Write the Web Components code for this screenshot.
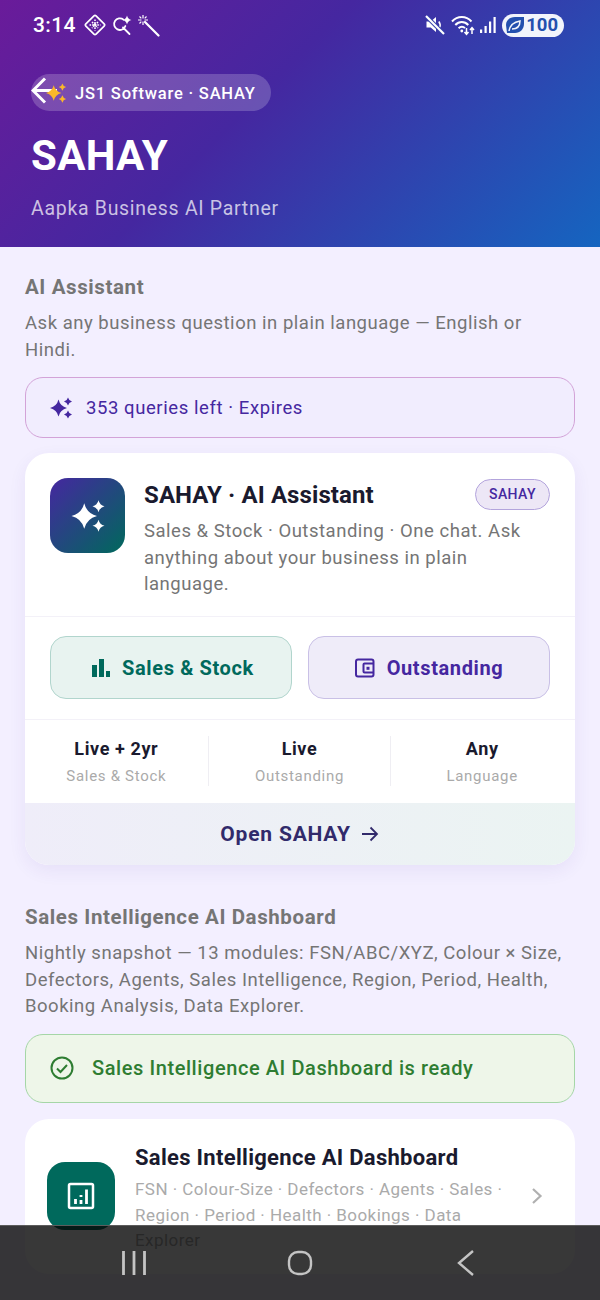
<!DOCTYPE html>
<html>
<head>
<meta charset="utf-8">
<title>SAHAY</title>
<style>
  html, body { margin: 0; padding: 0; }
  body {
    width: 600px;
    height: 1300px;
    overflow: hidden;
    position: relative;
    background: #f3efff;
    font-family: Roboto, "Liberation Sans", sans-serif;
  }
  main { display: block; padding: 27px 25px 0; }
  .gap-s { display: block; height: 15px; }
  .gap-m { display: block; height: 16px; }
  .gap-l { display: block; height: 39px; }
</style>
</head>
<body>

<app-header></app-header>

<main>
  <section-intro heading="AI Assistant">Ask any business question in plain language — English or Hindi.</section-intro>
  <query-chip>353 queries left · Expires</query-chip>
  <span class="gap-s"></span>
  <sahay-card></sahay-card>
  <span class="gap-l"></span>
  <section-intro heading="Sales Intelligence AI Dashboard">Nightly snapshot — 13 modules: FSN/ABC/XYZ, Colour × Size, Defectors, Agents, Sales Intelligence, Region, Period, Health, Booking Analysis, Data Explorer.</section-intro>
  <ready-banner>Sales Intelligence AI Dashboard is ready</ready-banner>
  <span class="gap-m"></span>
  <dash-card></dash-card>
</main>

<nav-bar></nav-bar>

<script>
(function () {

  // concave four point star, used by every sparkle icon
  function star(cx, cy, r) {
    const k = r * 0.2;
    return `M${cx} ${cy - r}Q${cx + k} ${cy - k} ${cx + r} ${cy}Q${cx + k} ${cy + k} ${cx} ${cy + r}Q${cx - k} ${cy + k} ${cx - r} ${cy}Q${cx - k} ${cy - k} ${cx} ${cy - r}Z`;
  }

  const SPARKLES = star(9.5, 12, 8.5) + star(19, 5.5, 4) + star(19, 18.5, 4);

  class Base extends HTMLElement {
    constructor() {
      super();
      this._shadowRoot = this.attachShadow({ mode: "open" });
    }
    connectedCallback() {
      this.render();
    }
  }

  // ===== STATUS BAR + HEADER =====
  class AppHeader extends Base {
    render() {
      this._shadowRoot.innerHTML = `
        <style>
          :host {
            display: block;
            height: 247px;
            box-sizing: border-box;
            background: linear-gradient(135deg, #6a1b9a 0%, #4527a0 42%, #1565c0 100%);
            color: #fff;
          }
          .status {
            display: flex;
            align-items: center;
            height: 50px;
            padding: 0 36px 0 33px;
          }
          .time { font-size: 21px; font-weight: 500; letter-spacing: .4px; margin-right: 8px; }
          .status svg { display: block; flex: none; }
          .spacer { flex: 1; }
          .batt {
            display: flex;
            align-items: center;
            gap: 1px;
            height: 23px;
            padding: 0 6px 0 3px;
            border-radius: 12px;
            background: #f2f4fb;
            color: #2450ae;
            font-size: 18.5px;
            font-weight: 700;
            margin-left: 6px;
          }
          .body { padding: 24px 31px 0; }
          .pill {
            position: relative;
            display: inline-flex;
            align-items: center;
            height: 37px;
            width: 240px;
            box-sizing: border-box;
            padding: 2px 0 0 44px;
            border-radius: 19px;
            background: rgba(255,255,255,.2);
            font-size: 16.5px;
            font-weight: 500;
            letter-spacing: .8px;
            white-space: nowrap;
          }
          .pill .spark { position: absolute; left: 14px; top: 8px; }
          .pill .back { position: absolute; left: 0; top: 0; }
          h1 { margin: 17px 0 0; font-size: 42px; line-height: 56px; font-weight: 700; letter-spacing: .3px; }
          p { margin: 12px 0 0; font-size: 19.5px; line-height: 26px; letter-spacing: .7px; color: rgba(255,255,255,.72); }
        </style>
        <div class="status">
          <span class="time">3:14</span>
          <svg width="22" height="22" viewBox="0 0 22 22" fill="none" stroke="#fff">
            <rect x="3.800" y="3.800" width="14.400" height="14.400" rx="1.500" transform="rotate(45 11 11)" stroke-width="1.700"/>
            <path d="M11 5.500v11M5.500 11h11M8 8l6 6M14 8l-6 6" stroke-width="1.500" stroke-dasharray="1.600 1"/>
          </svg>
          <svg style="margin-left:6px" width="21" height="21" viewBox="0 0 21 21" fill="none" stroke="#fff" stroke-width="1.800">
            <path d="M11.500 4.600A5.800 5.800 0 1 0 13.400 11M11 12.500l6.500 6.500" stroke-linecap="round"/>
            <path d="${star(15, 5, 4.500)}" fill="#fff" stroke="none"/>
          </svg>
          <svg style="margin-left:4px" width="23" height="23" viewBox="0 0 23 23" fill="none" stroke="#fff">
            <path d="M8 8l13.500 13.500" stroke-width="2.200" stroke-linecap="round"/>
            <path d="M6 1v3.500M6 7.500V11M1 6h3.500M7.500 6H11M2.500 2.500l1.800 1.800M9.500 2.500L7.700 4.300M2.500 9.500l1.800-1.800" stroke-width="1.200"/>
          </svg>
          <span class="spacer"></span>
          <svg width="20" height="20" viewBox="0 0 20 20" fill="#fff">
            <path d="M1.500 6.500h4.200L11 2v15l-5.300-4.500H1.500z"/>
            <path d="M13.800 6.500q2.200 3 .8 6" fill="none" stroke="#fff" stroke-width="1.600"/>
            <path d="M1.500 1.500l17 17" stroke="#3540ab" stroke-width="4"/>
            <path d="M1 1l18 18" stroke="#fff" stroke-width="2.100"/>
          </svg>
          <svg style="margin-left:6px" width="27" height="22" viewBox="0 0 27 22" fill="none" stroke="#fff" stroke-width="2">
            <path d="M1 7.500C6.500 1.600 15 1.600 20.500 7.500M4.300 11c3.800-4 9.200-4 13 0M7.600 14.300c2-2 4.600-2 6.400-.2"/>
            <circle cx="10.800" cy="17" r="1.400" fill="#fff" stroke="none"/>
            <path d="M15.500 14v6M13.500 18l2 2.300 2-2.300M21 20v-6M19 16l2-2.300 2 2.300" stroke-width="1.500"/>
          </svg>
          <svg style="margin-left:2px" width="16" height="20" viewBox="0 0 16 20" fill="#fff">
            <rect x="0" y="14.500" width="2.200" height="3.500"/><rect x="4.500" y="11" width="2.200" height="7"/><rect x="9" y="6.500" width="2.200" height="11.500"/><rect x="13.500" y="2" width="2.200" height="16"/>
          </svg>
          <span class="batt">
            <svg width="20" height="18" viewBox="0 0 20 18">
              <path d="M1 9C1 4 5 1 10 1h9v7c0 5-4 9-9 9H2z" fill="#2450ae"/>
              <path d="M4 15C5 9 9 6 15 5c0 5-3 8-8 8" fill="none" stroke="#f2f4fb" stroke-width="1.500"/>
            </svg>100</span>
        </div>
        <div class="body">
          <div class="pill">
            <svg class="back" width="30" height="32" viewBox="0 0 30 32" fill="none" stroke="#fff" stroke-width="3"><path d="M26 16.500H2M14 4.500L2 16.500l12 12"/></svg>
            <svg class="spark" width="22" height="22" viewBox="0 0 24 24" fill="#fbb829"><path d="${SPARKLES}"/></svg>
            JS1 Software · SAHAY
          </div>
          <h1>SAHAY</h1>
          <p>Aapka Business AI Partner</p>
        </div>
      `;
    }
  }

  // ===== SECTION HEADING =====
  class SectionIntro extends Base {
    render() {
      this._shadowRoot.innerHTML = `
        <style>
          :host { display: block; color: #757575; }
          h2 { margin: 0; font-size: 20.500px; line-height: 26px; font-weight: 700; letter-spacing: .6px; }
          p { margin: 10px 0 0; font-size: 18.500px; line-height: 26.600px; letter-spacing: .52px; }
        </style>
        <h2>${this.getAttribute("heading")}</h2>
        <p><slot></slot></p>
      `;
    }
  }

  // ===== QUERY CHIP =====
  class QueryChip extends Base {
    render() {
      this._shadowRoot.innerHTML = `
        <style>
          :host {
            display: flex;
            align-items: center;
            gap: 13px;
            height: 61px;
            box-sizing: border-box;
            margin-top: 14px;
            padding-left: 23px;
            border: 1.5px solid #d3a3d8;
            border-radius: 18px;
            background: #f1edfe;
            color: #4527a0;
            font-size: 18.500px;
            letter-spacing: .58px;
          }
        </style>
        <svg width="24" height="24" viewBox="0 0 24 24" fill="#4527a0"><path d="${SPARKLES}"/></svg>
        <slot></slot>
      `;
    }
  }

  // ===== SAHAY CARD =====
  class SahayCard extends Base {
    render() {
      this._shadowRoot.innerHTML = `
        <style>
          :host {
            display: block;
            border-radius: 24px;
            background: #fff;
            overflow: hidden;
            box-shadow: 0 6px 18px rgba(69,39,160,.07);
          }
          .top { display: flex; gap: 19px; padding: 25px 25px 20px; border-bottom: 1px solid #f3f1f8; height: 118px; }
          .logo {
            flex: none;
            width: 75px;
            height: 75px;
            border-radius: 18px;
            background: linear-gradient(135deg, #4527a0, #00695c);
            display: flex;
            align-items: center;
            justify-content: center;
          }
          .info { flex: 1; min-width: 0; }
          .row { display: flex; justify-content: space-between; align-items: center; height: 33px; }
          .title { font-size: 24px; font-weight: 700; color: #1a1a2e; letter-spacing: .1px; white-space: nowrap; }
          .badge {
            box-sizing: border-box;
            width: 75px;
            height: 31px;
            line-height: 28px;
            text-align: center;
            border: 1.5px solid #b3a4dc;
            border-radius: 16px;
            background: #ede7f6;
            color: #4527a0;
            font-size: 14px;
            font-weight: 500;
            letter-spacing: .4px;
          }
          .desc { margin: 7px 0 0; font-size: 18.500px; line-height: 26.600px; letter-spacing: .52px; color: #757575; }
          .actions { display: flex; gap: 16px; padding: 19px 25px 20px; border-bottom: 1px solid #f3f1f8; }
          .btn {
            flex: none;
            width: 242px;
            height: 63px;
            box-sizing: border-box;
            display: flex;
            align-items: center;
            justify-content: center;
            gap: 12px;
            border-radius: 16px;
            font-size: 20px;
            font-weight: 700;
            letter-spacing: .62px;
          }
          .green { background: #e8f3f0; border: 1.5px solid #b1d5cd; color: #00695c; padding-left: 4px; }
          .purple { background: #efecf9; border: 1.5px solid #c9c0e6; color: #4527a0; }
          .stats { display: grid; grid-template-columns: repeat(3, 1fr); padding: 16px 2px 17px 0; }
          .stat { text-align: center; height: 50px; border-left: 1px solid #efeef3; }
          .stat:first-child { border-left: 0; }
          .stat b { display: block; font-size: 18px; line-height: 26px; font-weight: 700; letter-spacing: .6px; color: #1a1a2e; }
          .stat span { display: block; font-size: 15px; line-height: 28px; letter-spacing: .7px; color: #aaa; }
          .open {
            height: 62px;
            display: flex;
            align-items: center;
            justify-content: center;
            gap: 9px;
            background: linear-gradient(90deg, #efedf9, #ebf4f2);
            color: #312a6b;
            font-size: 21px;
            font-weight: 700;
            letter-spacing: .8px;
          }
        </style>
        <div class="top">
          <div class="logo">
            <svg width="36" height="36" viewBox="0 0 24 24" fill="#fff"><path d="${SPARKLES}"/></svg>
          </div>
          <div class="info">
            <div class="row"><span class="title">SAHAY · AI Assistant</span><span class="badge">SAHAY</span></div>
            <p class="desc">Sales &amp; Stock · Outstanding · One chat. Ask anything about your business in plain language.</p>
          </div>
        </div>
        <div class="actions">
          <div class="btn green">
            <svg width="18" height="18" viewBox="0 0 18 18" fill="#00695c"><path d="M0 6h5v12H0zM7 0h5v18H7zM14 12h4v6h-4z"/></svg>
            Sales &amp; Stock
          </div>
          <div class="btn purple">
            <svg width="20" height="20" viewBox="0 0 20 20" fill="none" stroke="#4527a0" stroke-width="2"><rect x="1" y="1.500" width="17.500" height="17" rx="2"/><path d="M18.500 5.500H9.500a1 1 0 0 0-1 1v7a1 1 0 0 0 1 1h9"/><rect x="11.500" y="8.800" width="3" height="3" fill="#4527a0" stroke="none"/></svg>
            Outstanding
          </div>
        </div>
        <div class="stats">
          <div class="stat"><b>Live + 2yr</b><span>Sales &amp; Stock</span></div>
          <div class="stat"><b>Live</b><span>Outstanding</span></div>
          <div class="stat"><b>Any</b><span>Language</span></div>
        </div>
        <div class="open">
          Open SAHAY
          <svg width="20" height="20" viewBox="0 0 20 20" fill="none" stroke="#312a6b" stroke-width="1.800"><path d="M2 10h15M10.500 3.500L17 10l-6.500 6.500"/></svg>
        </div>
      `;
    }
  }

  // ===== READY BANNER =====
  class ReadyBanner extends Base {
    render() {
      this._shadowRoot.innerHTML = `
        <style>
          :host {
            display: flex;
            align-items: center;
            gap: 18px;
            height: 69px;
            box-sizing: border-box;
            margin-top: 14px;
            padding-left: 24px;
            border: 1.5px solid #a5d6a7;
            border-radius: 18px;
            background: #eef6e9;
            color: #2e7d32;
            font-size: 20px;
            font-weight: 500;
            letter-spacing: .58px;
          }
        </style>
        <svg width="24" height="24" viewBox="0 0 24 24" fill="none" stroke="#2e7d32" stroke-width="2"><circle cx="12" cy="12" r="10.500"/><path d="M7 12.500l3.500 3.500L17 9"/></svg>
        <slot></slot>
      `;
    }
  }

  // ===== DASHBOARD CARD =====
  class DashCard extends Base {
    render() {
      this._shadowRoot.innerHTML = `
        <style>
          :host {
            display: flex;
            align-items: center;
            gap: 20px;
            height: 155px;
            box-sizing: border-box;
            padding: 0 31px 0 22px;
            border-radius: 24px;
            background: #fff;
          }
          .logo {
            flex: none;
            width: 68px;
            height: 68px;
            border-radius: 18px;
            background: #00695c;
            display: flex;
            align-items: center;
            justify-content: center;
          }
          .text { flex: 1; min-width: 0; padding-top: 5px; }
          .title { font-size: 22px; line-height: 28px; font-weight: 700; color: #1a1a2e; letter-spacing: .3px; white-space: nowrap; }
          p { margin: 5px 0 0; font-size: 17px; line-height: 25.500px; letter-spacing: .45px; color: #aaa; }
          svg { flex: none; }
        </style>
        <div class="logo">
          <svg width="28" height="28" viewBox="0 0 28 28" fill="none" stroke="#fff" stroke-width="2.500">
            <rect x="2" y="2" width="24" height="24" rx="1.500"/>
            <path d="M8.500 17v5M14 13v2M14 18v4M19.500 7.500V22" stroke-width="2.800"/>
          </svg>
        </div>
        <div class="text">
          <div class="title">Sales Intelligence AI Dashboard</div>
          <p>FSN · Colour-Size · Defectors · Agents · Sales · Region · Period · Health · Bookings · Data Explorer</p>
        </div>
        <svg width="14" height="18" viewBox="0 0 14 18" fill="none" stroke="#b0b0b0" stroke-width="2.200"><path d="M3 2l7.500 7L3 16"/></svg>
      `;
    }
  }

  // ===== ANDROID NAV BAR (lies over the page) =====
  class NavBar extends Base {
    render() {
      this._shadowRoot.innerHTML = `
        <style>
          :host {
            position: absolute;
            left: 0;
            right: 0;
            bottom: 0;
            height: 75px;
            display: grid;
            grid-template-columns: 268px 64px 268px;
            background: rgba(6,6,6,.8);
            border-top: 1px solid #5c5c5c;
            box-sizing: border-box;
          }
          div { display: flex; align-items: center; justify-content: center; }
          svg { display: block; }
        </style>
        <div>
          <svg width="26" height="26" viewBox="0 0 26 26" fill="none" stroke="#c4c4c4" stroke-width="2.800"><path d="M2.500 1v24M13 1v24M23.500 1v24"/></svg>
        </div>
        <div>
          <svg width="26" height="26" viewBox="0 0 26 26" fill="none" stroke="#c4c4c4" stroke-width="2.400"><rect x="2" y="2" width="22" height="22" rx="9"/></svg>
        </div>
        <div>
          <svg width="18" height="28" viewBox="0 0 18 28" fill="none" stroke="#c4c4c4" stroke-width="2.400"><path d="M16 2L2 14l14 12"/></svg>
        </div>
      `;
    }
  }

  customElements.define("app-header", AppHeader);
  customElements.define("section-intro", SectionIntro);
  customElements.define("query-chip", QueryChip);
  customElements.define("sahay-card", SahayCard);
  customElements.define("ready-banner", ReadyBanner);
  customElements.define("dash-card", DashCard);
  customElements.define("nav-bar", NavBar);

})();
</script>
</body>
</html>
